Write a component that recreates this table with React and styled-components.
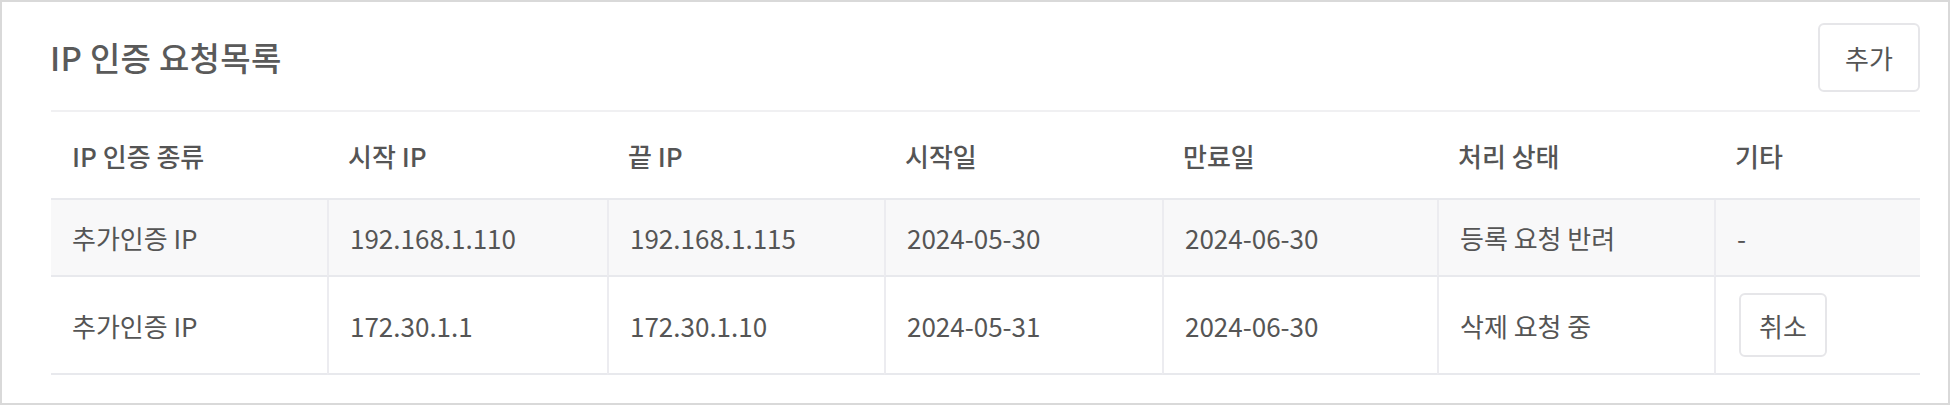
import React from "react";
import styled, { createGlobalStyle } from "styled-components";

const GlobalStyle = createGlobalStyle`
  * {
    box-sizing: border-box;
  }
  body {
    margin: 0;
    background: #fff;
    font-family: "Noto Sans CJK KR", "Noto Sans", sans-serif;
  }
`;

const Panel = styled.section`
  width: 1950px;
  height: 405px;
  border: 2px solid #d9d9d9;
  background: #fff;
  padding: 21px 28px 0 48px;
`;

const Header = styled.div`
  display: flex;
  align-items: center;
  justify-content: space-between;
  padding-bottom: 18px;
`;

const Title = styled.h2`
  margin: 0 0 2px;
  font-size: 33px;
  font-weight: 500;
  color: #5a5a5a;
  letter-spacing: 0.3px;
`;

const Button = styled.button`
  width: ${(p) => p.w}px;
  height: ${(p) => p.h}px;
  margin-left: ${(p) => p.offset || 0}px;
  border: 2px solid #e6e6e9;
  border-radius: 6px;
  background: #fff;
  color: #555;
  font-family: inherit;
  font-size: 26px;
  padding: 0;
  cursor: pointer;
`;

const Table = styled.table`
  width: 1869px;
  margin-left: 1px;
  border-collapse: separate;
  border-spacing: 0;
  border-top: 2px solid #f0f0f2;
  table-layout: fixed;
`;

const Th = styled.th`
  height: 88px;
  padding: 0 0 0 21px;
  text-align: left;
  font-size: 26px;
  font-weight: 500;
  color: #555;
  border-bottom: 2px solid #e8e9ed;
`;

const Row = styled.tr`
  background: ${(p) => (p.shaded ? "#f8f8f9" : "#fff")};
`;

const Td = styled.td`
  height: ${(p) => p.h}px;
  padding: 0 0 0 21px;
  font-size: 26px;
  font-weight: 400;
  color: #555;
  border-bottom: 2px solid #e8e9ed;
  & + & {
    border-left: 2px solid #ececf0;
  }
`;

const widths = [276, 280, 277, 278, 275, 277, 206];
const heads = ["IP 인증 종류", "시작 IP", "끝 IP", "시작일", "만료일", "처리 상태", "기타"];

const rows = [
  {
    cells: ["추가인증 IP", "192.168.1.110", "192.168.1.115", "2024-05-30", "2024-06-30", "등록 요청 반려"],
    extra: "-",
    shaded: true,
    h: 77,
  },
  {
    cells: ["추가인증 IP", "172.30.1.1", "172.30.1.10", "2024-05-31", "2024-06-30", "삭제 요청 중"],
    extra: "cancel",
    h: 98,
  },
];

export default function App() {
  return (
    <>
      <GlobalStyle />
      <Panel>
        <Header>
          <Title>IP 인증 요청목록</Title>
          <Button w={102} h={69}>추가</Button>
        </Header>
        <Table>
          <colgroup>
            {widths.map((w, i) => (
              <col key={i} style={{ width: w }} />
            ))}
          </colgroup>
          <thead>
            <tr>
              {heads.map((h) => (
                <Th key={h}>{h}</Th>
              ))}
            </tr>
          </thead>
          <tbody>
            {rows.map((r, i) => (
              <Row key={i} shaded={r.shaded}>
                {r.cells.map((c, j) => (
                  <Td key={j} h={r.h}>{c}</Td>
                ))}
                <Td h={r.h}>
                  {r.extra === "cancel" ? (
                    <Button w={88} h={64} offset={2}>취소</Button>
                  ) : (
                    r.extra
                  )}
                </Td>
              </Row>
            ))}
          </tbody>
        </Table>
      </Panel>
    </>
  );
}
